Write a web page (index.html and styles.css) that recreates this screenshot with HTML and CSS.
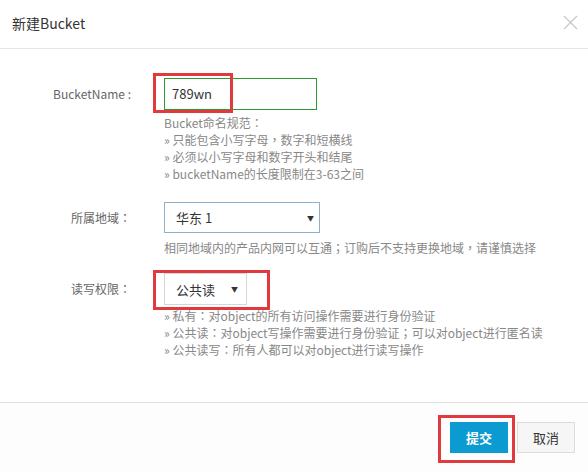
FILE: index.html
```html
<!DOCTYPE html>
<html lang="zh-CN">
<head>
<meta charset="utf-8">
<title>新建Bucket</title>
<link rel="stylesheet" href="styles.css">
</head>
<body>
<div class="modal">
  <div class="header">
    <span class="title">新建Bucket</span>
    <svg class="close" width="15" height="15" viewBox="0 0 15 15"><path d="M1 1L14 14M14 1L1 14" stroke="#c8c8c8" stroke-width="1.3" fill="none"/></svg>
  </div>
  <div class="body">
    <div class="row row-name">
      <div class="label">BucketName :</div>
      <div class="control">
        <div class="field">
          <div class="input">789wn</div>
          <div class="mark mark-name"></div>
        </div>
        <div class="help">
          <div>Bucket命名规范<span class="p" lang="zh-TW">：</span></div>
          <div>» 只能包含小写字母<span class="p" lang="zh-TW">，</span>数字和短横线</div>
          <div>» 必须以小写字母和数字开头和结尾</div>
          <div>» bucketName的长度限制在3-63之间</div>
        </div>
      </div>
    </div>
    <div class="row row-region">
      <div class="label">所属地域<span class="p" lang="zh-TW">：</span></div>
      <div class="control">
        <div class="select select-region"><span>华东 1</span><span class="arrow">▼</span></div>
        <div class="help help-region">相同地域内的产品内网可以互通<span class="p" lang="zh-TW">；</span>订购后不支持更换地域<span class="p" lang="zh-TW">，</span>请谨慎选择</div>
      </div>
    </div>
    <div class="row row-acl">
      <div class="label">读写权限<span class="p" lang="zh-TW">：</span></div>
      <div class="control">
        <div class="field">
          <div class="select select-acl"><span>公共读</span><span class="arrow">▼</span></div>
          <div class="mark mark-acl"></div>
        </div>
        <div class="help help-acl">
          <div>» 私有<span class="p" lang="zh-TW">：</span>对object的所有访问操作需要进行身份验证</div>
          <div>» 公共读<span class="p" lang="zh-TW">：</span>对object写操作需要进行身份验证<span class="p" lang="zh-TW">；</span>可以对object进行匿名读</div>
          <div>» 公共读写<span class="p" lang="zh-TW">：</span>所有人都可以对object进行读写操作</div>
        </div>
      </div>
    </div>
  </div>
  <div class="footer">
    <div class="btn-wrap">
      <button class="btn btn-primary">提交</button>
      <div class="mark mark-submit"></div>
    </div>
    <button class="btn btn-default">取消</button>
  </div>
</div>
</body>
</html>
```

FILE: styles.css
```css
html, body {
  margin: 0;
  padding: 0;
  background: #fff;
}
body {
  font-family: "Noto Sans CJK SC", "Liberation Sans", sans-serif;
  font-size: 12px;
  color: #666;
}
.p {
  font-family: "Noto Sans CJK TC", "Noto Sans CJK SC", sans-serif;
}
.modal {
  width: 588px;
  height: 472px;
  display: flex;
  flex-direction: column;
  overflow: hidden;
}
.header {
  height: 48px;
  border-bottom: 1px solid #e5e5e5;
  display: flex;
  align-items: center;
  justify-content: space-between;
  padding: 0 10px 0 12px;
  flex-shrink: 0;
}
.title {
  font-size: 14px;
  color: #333;
  margin-top: -3px;
}
.close {
  margin-top: -4px;
}
.body {
  height: 353px;
  flex-shrink: 0;
  padding-top: 29px;
  box-sizing: border-box;
}
.row {
  display: flex;
}
.label {
  width: 131px;
  text-align: right;
  color: #666;
  flex-shrink: 0;
  margin-right: 33px;
  line-height: 32px;
}
.control {
  display: flex;
  flex-direction: column;
  align-items: flex-start;
}
.field {
  position: relative;
}
.input {
  width: 153px;
  height: 32px;
  box-sizing: border-box;
  border: 1px solid #2c9a2c;
  padding-left: 7px;
  font-size: 13px;
  color: #333;
  line-height: 30px;
}
.mark {
  position: absolute;
  border: 3px solid #e0393e;
  box-sizing: border-box;
}
.mark-name {
  left: -11px;
  top: -5px;
  width: 80px;
  height: 40px;
}
.help {
  color: #888;
  line-height: 17px;
  margin-top: 4px;
}
.row-region {
  margin-top: 20px;
}
.row-region .label {
  line-height: 31px;
}
.select {
  height: 31px;
  box-sizing: border-box;
  display: flex;
  align-items: center;
  justify-content: space-between;
  color: #333;
  font-size: 13px;
}
.select-region {
  width: 156px;
  border: 1px solid #8fb0cb;
  padding: 0 5px 0 11px;
}
.arrow {
  font-size: 7px;
  color: #333;
}
.help-region {
  margin-top: 6px;
}
.row-acl {
  margin-top: 17px;
}
.select-acl {
  width: 83px;
  height: 32px;
  border: 1px solid #d6d6d6;
  padding: 0 8px 0 11px;
}
.mark-acl {
  left: -11px;
  top: -3px;
  width: 117px;
  height: 40px;
}
.help-acl {
  margin-top: 2px;
}
.footer {
  flex: 1;
  border-top: 1px solid #e2e2e2;
  background: #fdfdfd;
  display: flex;
  justify-content: flex-end;
  align-items: flex-start;
  padding: 19px 13px 0 0;
  gap: 9px;
}
.btn-wrap {
  position: relative;
}
.btn {
  width: 58px;
  height: 31px;
  font-family: "Noto Sans CJK SC", "Liberation Sans", sans-serif;
  font-size: 13px;
  padding: 0;
  margin: 0;
  cursor: pointer;
  display: block;
}
.btn-primary {
  background: #0b9bd0;
  border: 1px solid #0b9bd0;
  color: #fff;
  font-weight: bold;
}
.btn-default {
  background: #f6f6f6;
  border: 1px solid #dcdcdc;
  color: #333;
}
.mark-submit {
  left: -12px;
  top: -7px;
  width: 77px;
  height: 48px;
}
```
